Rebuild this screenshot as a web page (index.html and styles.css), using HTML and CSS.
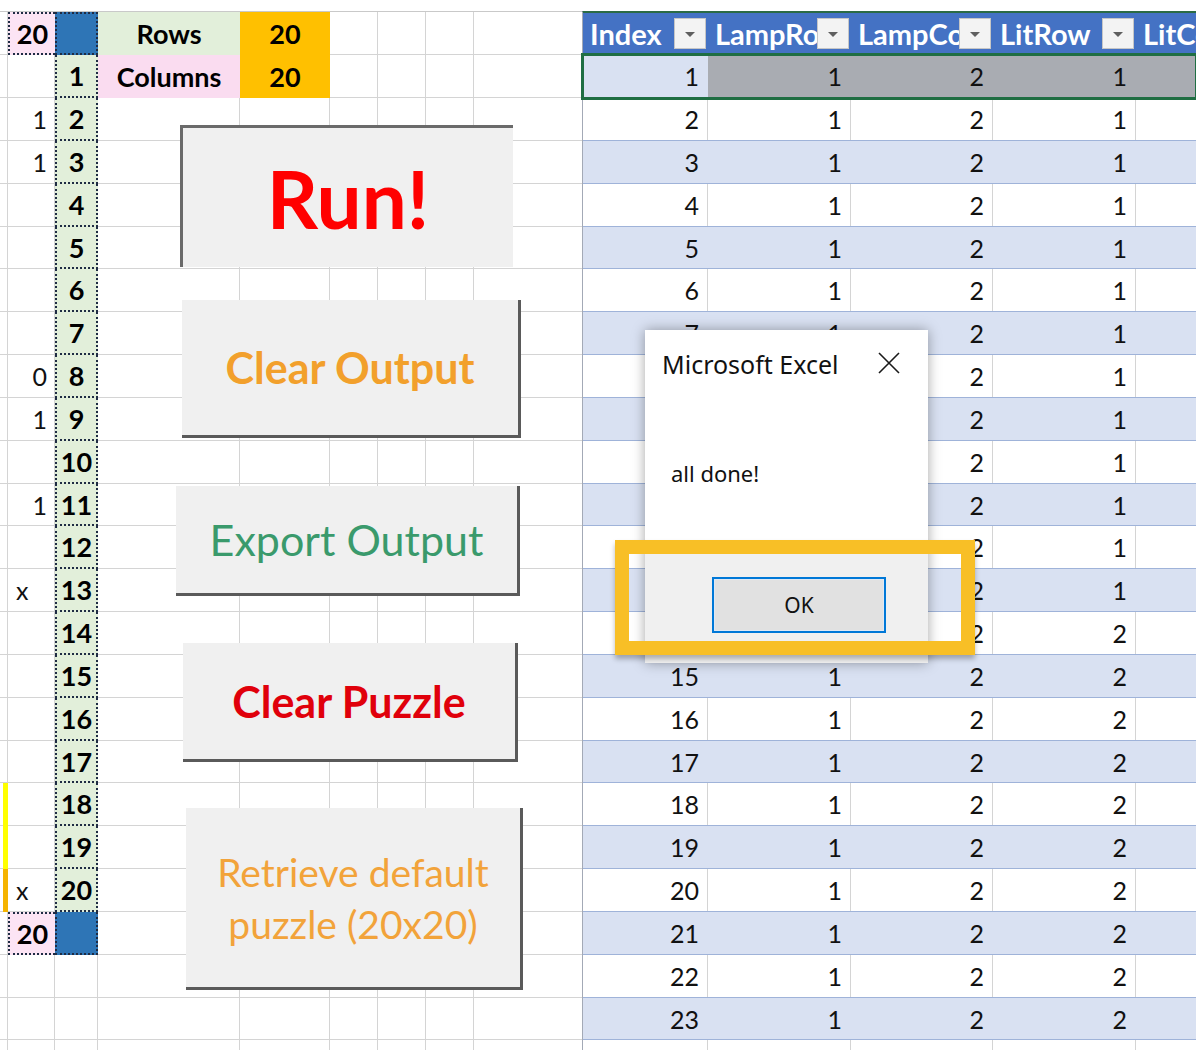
FILE: index.html
```html
<!DOCTYPE html>
<html>
<head>
<meta charset="utf-8">
<title>Lamps puzzle</title>
<link rel="stylesheet" href="styles.css">
</head>
<body>
<div class="sheet">
  <div class="left">
    <div class="row"><div class="c ca b pink dot dtop fill ctr">20</div><div class="c cb b blue dot dtop fill"></div><div class="c cc b green fill">Rows</div><div class="c cd b orange fill">20</div></div>
    <div class="row"><div class="c cb b green dot fill">1</div><div class="c cc b pink2 fill">Columns</div><div class="c cd b orange fill">20</div></div>
    <div class="row"><div class="c ca">1</div><div class="c cb b green dot fill">2</div></div>
    <div class="row"><div class="c ca">1</div><div class="c cb b green dot fill">3</div></div>
    <div class="row"><div class="c cb b green dot fill">4</div></div>
    <div class="row"><div class="c cb b green dot fill">5</div></div>
    <div class="row"><div class="c cb b green dot fill">6</div></div>
    <div class="row"><div class="c cb b green dot fill">7</div></div>
    <div class="row"><div class="c ca">0</div><div class="c cb b green dot fill">8</div></div>
    <div class="row"><div class="c ca">1</div><div class="c cb b green dot fill">9</div></div>
    <div class="row"><div class="c cb b green dot fill">10</div></div>
    <div class="row"><div class="c ca">1</div><div class="c cb b green dot fill">11</div></div>
    <div class="row"><div class="c cb b green dot fill">12</div></div>
    <div class="row"><div class="c ca lft">x</div><div class="c cb b green dot fill">13</div></div>
    <div class="row"><div class="c cb b green dot fill">14</div></div>
    <div class="row"><div class="c cb b green dot fill">15</div></div>
    <div class="row"><div class="c cb b green dot fill">16</div></div>
    <div class="row"><div class="c cb b green dot fill">17</div></div>
    <div class="row"><div class="c c0 yel fill"></div><div class="c cb b green dot fill">18</div></div>
    <div class="row"><div class="c c0 yel fill"></div><div class="c cb b green dot fill">19</div></div>
    <div class="row"><div class="c c0 org fill"></div><div class="c ca lft">x</div><div class="c cb b green dot fill">20</div></div>
    <div class="row"><div class="c ca b pink dot dtop fill ctr">20</div><div class="c cb b blue dot fill"></div></div>
    <div class="row"></div>
    <div class="row"></div>
    <div class="row tail"></div>
  </div>

  <div class="tbl">
    <div class="row trow hd">
      <div class="th">Index<span class="flt"></span></div>
      <div class="th">LampRow<span class="flt"></span></div>
      <div class="th">LampCol<span class="flt"></span></div>
      <div class="th">LitRow<span class="flt"></span></div>
      <div class="th">LitCol<span class="flt"></span></div>
    </div>
    <div class="row trow band selrow"><div class="td">1</div><div class="td gray">1</div><div class="td gray">2</div><div class="td gray">1</div><div class="td gray"></div></div>
    <div class="row trow"><div class="td">2</div><div class="td">1</div><div class="td">2</div><div class="td">1</div><div class="td"></div></div>
    <div class="row trow band"><div class="td">3</div><div class="td">1</div><div class="td">2</div><div class="td">1</div><div class="td"></div></div>
    <div class="row trow"><div class="td">4</div><div class="td">1</div><div class="td">2</div><div class="td">1</div><div class="td"></div></div>
    <div class="row trow band"><div class="td">5</div><div class="td">1</div><div class="td">2</div><div class="td">1</div><div class="td"></div></div>
    <div class="row trow"><div class="td">6</div><div class="td">1</div><div class="td">2</div><div class="td">1</div><div class="td"></div></div>
    <div class="row trow band"><div class="td">7</div><div class="td">1</div><div class="td">2</div><div class="td">1</div><div class="td"></div></div>
    <div class="row trow"><div class="td">8</div><div class="td">1</div><div class="td">2</div><div class="td">1</div><div class="td"></div></div>
    <div class="row trow band"><div class="td">9</div><div class="td">1</div><div class="td">2</div><div class="td">1</div><div class="td"></div></div>
    <div class="row trow"><div class="td">10</div><div class="td">1</div><div class="td">2</div><div class="td">1</div><div class="td"></div></div>
    <div class="row trow band"><div class="td">11</div><div class="td">1</div><div class="td">2</div><div class="td">1</div><div class="td"></div></div>
    <div class="row trow"><div class="td">12</div><div class="td">1</div><div class="td">2</div><div class="td">1</div><div class="td"></div></div>
    <div class="row trow band"><div class="td">13</div><div class="td">1</div><div class="td">2</div><div class="td">1</div><div class="td"></div></div>
    <div class="row trow"><div class="td">14</div><div class="td">1</div><div class="td">2</div><div class="td">2</div><div class="td"></div></div>
    <div class="row trow band"><div class="td">15</div><div class="td">1</div><div class="td">2</div><div class="td">2</div><div class="td"></div></div>
    <div class="row trow"><div class="td">16</div><div class="td">1</div><div class="td">2</div><div class="td">2</div><div class="td"></div></div>
    <div class="row trow band"><div class="td">17</div><div class="td">1</div><div class="td">2</div><div class="td">2</div><div class="td"></div></div>
    <div class="row trow"><div class="td">18</div><div class="td">1</div><div class="td">2</div><div class="td">2</div><div class="td"></div></div>
    <div class="row trow band"><div class="td">19</div><div class="td">1</div><div class="td">2</div><div class="td">2</div><div class="td"></div></div>
    <div class="row trow"><div class="td">20</div><div class="td">1</div><div class="td">2</div><div class="td">2</div><div class="td"></div></div>
    <div class="row trow band"><div class="td">21</div><div class="td">1</div><div class="td">2</div><div class="td">2</div><div class="td"></div></div>
    <div class="row trow"><div class="td">22</div><div class="td">1</div><div class="td">2</div><div class="td">2</div><div class="td"></div></div>
    <div class="row trow band"><div class="td">23</div><div class="td">1</div><div class="td">2</div><div class="td">2</div><div class="td"></div></div>
    <div class="row trow tail"><div class="td"></div><div class="td"></div><div class="td"></div><div class="td"></div><div class="td"></div></div>
  </div>

  <div class="btn btn-run"><span>Run!</span></div>
  <div class="btn btn-clear-out"><span>Clear Output</span></div>
  <div class="btn btn-export"><span>Export Output</span></div>
  <div class="btn btn-clear-puz"><span>Clear Puzzle</span></div>
  <div class="btn btn-retrieve"><span>Retrieve default<br>puzzle (20x20)</span></div>

  <div class="dialog">
    <div class="dlg-head">
      <span class="dlg-title">Microsoft Excel</span>
      <svg class="dlg-close" width="24" height="24" viewBox="0 0 24 24"><path d="M2 2 L22 22 M22 2 L2 22" stroke="#1a1a1a" stroke-width="1.6" fill="none"/></svg>
    </div>
    <div class="dlg-body">all done!</div>
    <div class="dlg-foot"><div class="ok">OK</div></div>
  </div>
  <div class="frame"></div>
</div>
</body>
</html>
```

FILE: styles.css
```css
* { box-sizing: border-box; }
html, body { margin: 0; padding: 0; overflow: hidden; background: #fff; }
body { font-family: Lato, "Liberation Sans", sans-serif; color: #111; }

.sheet {
  position: relative;
  width: 1196px;
  height: 1060px;
  overflow: hidden;
  display: flex;
  align-items: flex-start;
  padding-top: 11px;
}

/* ---------- left sheet area ---------- */
.left {
  width: 582px;
  flex: none;
  border-top: 1px solid #c9c9c9;
  background-image: linear-gradient(to right,
    transparent 7px, #d4d4d4 7px 8px,
    transparent 8px 54px, #d4d4d4 54px 55px,
    transparent 55px 97px, #d4d4d4 97px 98px,
    transparent 98px 239px, #d4d4d4 239px 240px,
    transparent 240px 329px, #d4d4d4 329px 330px,
    transparent 330px 377px, #d4d4d4 377px 378px,
    transparent 378px 425px, #d4d4d4 425px 426px,
    transparent 426px 473px, #d4d4d4 473px 474px,
    transparent 474px);
}

.row {
  display: grid;
  height: 43px;
  border-bottom: 1px solid #d4d4d4;
}
.row:nth-child(6n) { height: 42px; }
.row.tail { height: 10px; border-bottom: 0; }

.left .row {
  grid-template-columns: 8px 47px 43px 142px 90px 48px 48px 48px 108px;
}

.c {
  display: flex;
  align-items: center;
  font-size: 25px;
  padding: 0 8px;
  white-space: nowrap;
  grid-row: 1;
}
.c0 { grid-column: 1; padding: 0; }
.ca { grid-column: 2; justify-content: flex-end; }
.cb { grid-column: 3; justify-content: center; padding: 0; }
.cc { grid-column: 4; justify-content: center; }
.cd { grid-column: 5; justify-content: center; }
.ctr { justify-content: center; padding: 0; }
.lft { justify-content: flex-start; }
.b { font-weight: 700; font-size: 27px; color: #000; }
.fill { margin-bottom: -1px; }

.dot {
  border-left: 2px dotted #1f2c44;
  border-right: 2px dotted #1f2c44;
  border-bottom: 2px dotted #1f2c44;
}
.dtop { border-top: 2px dotted #1f2c44; }
.ca.dot { border-right: 0; }

.green { background: #E2EFDA; }
.pink { background: #FCE4F4; }
.pink2 { background: #FADCF0; }
.blue { background: #2E75B6; }
.orange { background: #FFC000; }
.yel { background: linear-gradient(to right, transparent 3px, #FFFF00 3px); }
.org { background: linear-gradient(to right, transparent 3px, #F5B400 3px); }

/* ---------- table ---------- */
.tbl {
  width: 614px;
  flex: none;
  border-top: 1px solid #2b6b45;
  border-left: 1px solid #a3a9b6;
}
.trow {
  grid-template-columns: 125px 143px 142px 143px 143px;
  border-bottom-color: #9fb3d9;
}
.trow.tail { border-bottom: 0; }
.hd {
  background: #4472C4;
  box-shadow: inset 0 1px 0 #2b6b45;
  border-bottom-color: #8ea9db;
}
.th {
  position: relative;
  display: flex;
  align-items: center;
  padding-left: 7px;
  overflow: hidden;
  white-space: nowrap;
  color: #fff;
  font-weight: 700;
  font-size: 29px;
}
.flt {
  position: absolute;
  right: 2px;
  top: 6px;
  width: 32px;
  height: 31px;
  background: #F3F3F3;
  border: 1px solid #c6c6c6;
}
.flt::after {
  content: "";
  position: absolute;
  left: 50%;
  top: 50%;
  margin: -2px 0 0 -5px;
  border-left: 5px solid transparent;
  border-right: 5px solid transparent;
  border-top: 5px solid #5f5f5f;
}
.td {
  display: flex;
  align-items: center;
  justify-content: flex-end;
  padding-right: 8px;
  font-size: 25px;
  color: #111;
  border-right: 1px solid #d4d4d4;
}
.band { background: #D9E1F2; }
.band .td { border-right-color: transparent; }
.td.gray { background: #A9ACB2; }
.selrow {
  position: relative;
  z-index: 2;
  outline: 3px solid #1f6e43;
  outline-offset: -1px;
}

/* ---------- floating buttons ---------- */
.btn {
  position: absolute;
  display: flex;
  align-items: center;
  justify-content: center;
  text-align: center;
  background: #F0F0F0;
  border-right: 3px solid #5a5a5a;
  border-bottom: 3px solid #5a5a5a;
  z-index: 3;
}
.btn-run {
  left: 180px; top: 125px; width: 333px; height: 142px;
  border: 0;
  border-top: 3px solid #6a6a6a;
  border-left: 3px solid #6a6a6a;
  color: #FF0000;
  font-weight: 700;
  font-size: 80px;
}
.btn-clear-out {
  left: 182px; top: 300px; width: 339px; height: 138px;
  color: #F2A02C;
  font-weight: 700;
  font-size: 43px;
}
.btn-export {
  left: 176px; top: 486px; width: 344px; height: 110px;
  color: #3A9A6C;
  font-size: 43px;
}
.btn-clear-puz {
  left: 183px; top: 643px; width: 335px; height: 119px;
  color: #E0000B;
  font-weight: 700;
  font-size: 43px;
}
.btn-retrieve {
  left: 186px; top: 808px; width: 337px; height: 182px;
  color: #F2A33A;
  font-size: 39px;
  line-height: 52px;
}

/* ---------- message box ---------- */
.dialog {
  position: absolute;
  left: 645px;
  top: 330px;
  width: 283px;
  height: 333px;
  z-index: 5;
  background: #fff;
  display: flex;
  flex-direction: column;
  font-family: "Noto Sans", "Open Sans", sans-serif;
  box-shadow: 0 0 12px rgba(0, 0, 0, 0.35);
}
.dlg-head {
  height: 68px;
  flex: none;
  display: flex;
  align-items: center;
  justify-content: space-between;
  padding: 0 27px 0 17px;
}
.dlg-title { font-size: 25px; color: #111; }
.dlg-close { display: block; margin-top: -2px; }
.dlg-body {
  flex: 1;
  padding: 60px 0 0 26px;
  font-size: 22px;
  line-height: 30px;
  color: #111;
}
.dlg-foot {
  height: 118px;
  flex: none;
  background: #F0F0F0;
  display: flex;
  justify-content: flex-end;
  align-items: flex-start;
  padding: 32px 42px 0 0;
}
.ok {
  width: 174px;
  height: 56px;
  border: 2px solid #0078D7;
  background: #E1E1E1;
  box-shadow: inset 0 0 0 1px #dfe9f5;
  display: flex;
  align-items: center;
  justify-content: center;
  font-size: 21px;
  color: #111;
}
.frame {
  position: absolute;
  left: 615px;
  top: 540px;
  width: 360px;
  height: 115px;
  z-index: 6;
  border: 14px solid #F8BF26;
  box-shadow: 0 4px 5px rgba(0, 0, 0, 0.28);
}
```
